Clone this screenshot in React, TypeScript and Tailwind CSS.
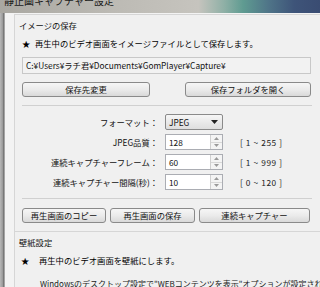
import React from "react";

const font = { fontFamily: '"Noto Sans CJK JP", "Noto Sans", sans-serif' };

function Btn({ w, children }: { w: string; children: React.ReactNode }) {
  return (
    <div
      className={`${w} h-[15px] flex items-center justify-center rounded-[3px] border border-[#8a8a8a] bg-gradient-to-b from-[#f6f6f6] via-[#ebebeb] to-[#d9d9d9] text-[8.3px] leading-none text-[#111]`}
    >
      {children}
    </div>
  );
}

function Spin({ label, value, range }: { label: string; value: string; range: string }) {
  return (
    <div className="flex items-center h-[16px]">
      <div className="w-[136px] text-right text-[8.3px] leading-none text-[#111]">{label}</div>
      <div className="ml-[7px] flex h-[16px] w-[58px] border border-[#abadb3] bg-white">
        <div className="flex-1 flex items-center pl-[3px] text-[8.3px] leading-none text-[#111]">{value}</div>
        <div className="w-[12px] flex flex-col border-l border-[#d0d0d0] bg-[#f4f4f4]">
          <div className="flex-1 flex items-center justify-center border-b border-[#d8d8d8]">
            <svg width="5" height="3" viewBox="0 0 5 3"><path d="M0 3 L2.5 0 L5 3 Z" fill="#9a9a9a" /></svg>
          </div>
          <div className="flex-1 flex items-center justify-center">
            <svg width="5" height="3" viewBox="0 0 5 3"><path d="M0 0 L2.5 3 L5 0 Z" fill="#9a9a9a" /></svg>
          </div>
        </div>
      </div>
      <div className="ml-[17px] text-[8.3px] leading-none text-[#222] tracking-[0.6px]">{range}</div>
    </div>
  );
}

export default function App() {
  return (
    <div className="w-[320px] h-[287px] overflow-hidden bg-[#f0f0f0] flex flex-col" style={font}>
      {/* title bar */}
      <div className="h-[13px] shrink-0 bg-[linear-gradient(90deg,#a9a7a1_0%,#bcbab4_35%,#c6c4be_62%,#8fb0a6_70%,#5f9b91_76%,#4f7488_84%,#3e5479_92%,#3a4c72_100%)] relative overflow-hidden">
        <div className="absolute left-[4px] top-[-4px] text-[10px] leading-none text-[#1a1a1a] whitespace-nowrap">静止画キャプチャー設定</div>
      </div>
      <div className="flex flex-1 min-h-0">
        {/* left frame */}
        <div className="w-[5px] shrink-0 bg-[linear-gradient(90deg,#b8b8b8_0%,#9c9c9c_50%,#6f6f6f_75%,#c8c8c8_100%)]" />
        <div className="flex-1 flex flex-col pl-[9px] pr-[4px] pt-[1px] bg-[#f3f3f3]">
          {/* group 1 */}
          <div className="border border-[#d6d6d6] bg-[#f0f0f0] pl-[4px] pt-[5px] pb-[8px]">
            <div className="h-[11px] flex items-center text-[8.3px] leading-none text-[#111]">イメージの保存</div>
            <div className="mt-[7px] h-[11px] flex items-center pl-[3px] text-[8.3px] leading-none text-black">
              <span className="w-[13px]">★</span>
              <span>再生中のビデオ画面をイメージファイルとして保存します。</span>
            </div>
            <div className="pl-[3px]">
              <div className="mt-[8px] h-[17px] w-[289px] border border-[#c8c8c8] bg-[#f2f2f2] flex items-center pl-[3px] text-[8.3px] leading-none text-[#111]">
                C:¥Users¥ラチ君¥Documents¥GomPlayer¥Capture¥
              </div>
              <div className="mt-[8px] flex gap-[35px]">
                <Btn w="w-[128px]">保存先変更</Btn>
                <Btn w="w-[126px]">保存フォルダを開く</Btn>
              </div>
              <div className="mt-[8px] h-px w-[290px] bg-[#d0d0d0]" />
              <div className="mt-[8px] flex flex-col gap-[4px]">
                <div className="flex items-center h-[16px]">
                  <div className="w-[136px] text-right text-[8.3px] leading-none text-[#111]">フォーマット：</div>
                  <div className="ml-[7px] h-[16px] w-[58px] rounded-[2px] border border-[#8a8a8a] bg-gradient-to-b from-[#f6f6f6] to-[#dedede] flex items-center justify-between pl-[3px] pr-[4px] text-[8.3px] leading-none text-[#111]">
                    <span>JPEG</span>
                    <svg width="7" height="4" viewBox="0 0 7 4"><path d="M0 0 L3.5 4 L7 0 Z" fill="#222" /></svg>
                  </div>
                </div>
                <Spin label="JPEG品質：" value="128" range="[ 1 ~ 255 ]" />
                <Spin label="連続キャプチャーフレーム：" value="60" range="[ 1 ~ 999 ]" />
                <Spin label="連続キャプチャー間隔(秒)：" value="10" range="[ 0 ~ 120 ]" />
              </div>
              <div className="mt-[8px] h-px w-[290px] bg-[#d0d0d0]" />
              <div className="mt-[9px] flex gap-[4px]">
                <Btn w="w-[84px]">再生画面のコピー</Btn>
                <Btn w="w-[85px]">再生画面の保存</Btn>
                <Btn w="w-[111px]">連続キャプチャー</Btn>
              </div>
            </div>
          </div>
          {/* group 2 */}
          <div className="border-x border-[#d6d6d6] bg-[#f0f0f0] pl-[4px] pt-[5px] flex-1">
            <div className="h-[11px] flex items-center text-[8.3px] leading-none text-[#111]">壁紙設定</div>
            <div className="mt-[7px] h-[11px] flex items-center pl-[2px] text-[8.3px] leading-none text-black">
              <span className="w-[18px]">★</span>
              <span>再生中のビデオ画面を壁紙にします。</span>
            </div>
            <div className="mt-[12px] pl-[21px] h-[11px] flex items-center text-[8px] leading-none text-[#222] whitespace-nowrap">
              Windowsのデスクトップ設定で"WEBコンテンツを表示"オプションが設定され
            </div>
          </div>
        </div>
      </div>
    </div>
  );
}
